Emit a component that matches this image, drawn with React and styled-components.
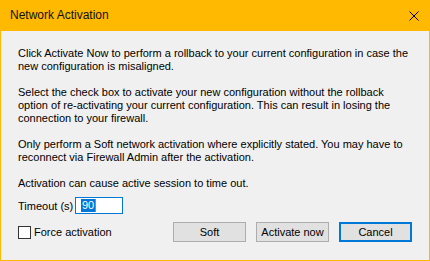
import React from "react";
import styled, { createGlobalStyle } from "styled-components";

const GlobalStyle = createGlobalStyle`
  html, body {
    margin: 0;
    padding: 0;
    background: #f0f0f0;
  }
  body {
    font-family: "Liberation Sans", Arial, sans-serif;
    font-size: 11px;
    color: #000000;
  }
`;

const Window = styled.div`
  box-sizing: border-box;
  width: 430px;
  height: 261px;
  border: 1px solid #ffb900;
  border-top: none;
  background: #f0f0f0;
  display: flex;
  flex-direction: column;
`;

const TitleBar = styled.div`
  height: 31px;
  margin: 0 -1px;
  background: #ffb900;
  display: flex;
  align-items: center;
  justify-content: space-between;
  padding: 0 10px 0 10px;
  flex-shrink: 0;
`;

const Title = styled.div`
  font-size: 12px;
  color: #111;
  padding-bottom: 1px;
`;

const CloseButton = styled.div`
  width: 10px;
  height: 10px;
  display: flex;
  margin-right: 1px;
`;

const Body = styled.div`
  padding: 16px 17px 0 17px;
  display: flex;
  flex-direction: column;
`;

const Paragraph = styled.p`
  margin: 0 0 ${(p) => p.gap ?? 13}px 0;
  line-height: 13px;
`;

const TimeoutRow = styled.div`
  display: flex;
  align-items: center;
  height: 17px;
`;

const Label = styled.span`
  width: 57px;
`;

const TimeoutInput = styled.div`
  box-sizing: border-box;
  width: 48px;
  height: 17px;
  border: 1px solid #0078d7;
  background: #ffffff;
  display: flex;
  align-items: center;
  padding-left: 5px;
`;

const Selected = styled.span`
  background: #0078d7;
  color: #ffffff;
  line-height: 13px;
  padding: 0 1px;
`;

const Caret = styled.span`
  width: 1px;
  height: 13px;
  background: #e8741a;
`;

const BottomRow = styled.div`
  display: flex;
  align-items: center;
  margin-top: 8px;
`;

const CheckLabel = styled.label`
  display: flex;
  align-items: center;
  gap: 3px;
  flex: 1;
`;

const CheckBox = styled.span`
  box-sizing: border-box;
  width: 13px;
  height: 13px;
  border: 1px solid #333333;
  background: #ffffff;
`;

const Buttons = styled.div`
  display: flex;
  gap: 10px;
`;

const Button = styled.button`
  box-sizing: border-box;
  width: 73px;
  height: 20px;
  background: #e1e1e1;
  border: ${(p) => (p.primary ? "2px solid #0078d7" : "1px solid #adadad")};
  font-family: "Liberation Sans", Arial, sans-serif;
  font-size: 11px;
  color: #000;
  padding: 0;
`;

export default function App() {
  return (
    <>
      <GlobalStyle />
      <Window>
        <TitleBar>
          <Title>Network Activation</Title>
          <CloseButton>
            <svg width="10" height="10" viewBox="0 0 10 10">
              <path d="M0.5 0.5 L9.5 9.5 M9.5 0.5 L0.5 9.5" stroke="#000" strokeWidth="1" fill="none" />
            </svg>
          </CloseButton>
        </TitleBar>
        <Body>
          <Paragraph>
            Click Activate Now to perform a rollback to your current configuration in case the
            <br />
            new configuration is misaligned.
          </Paragraph>
          <Paragraph>
            Select the check box to activate your new configuration without the rollback
            <br />
            option of re-activating your current configuration. This can result in losing the
            <br />
            connection to your firewall.
          </Paragraph>
          <Paragraph>
            Only perform a Soft network activation where explicitly stated. You may have to
            <br />
            reconnect via Firewall Admin after the activation.
          </Paragraph>
          <Paragraph gap={7}>Activation can cause active session to time out.</Paragraph>
          <TimeoutRow>
            <Label>Timeout (s)</Label>
            <TimeoutInput>
              <Selected>90</Selected>
              <Caret />
            </TimeoutInput>
          </TimeoutRow>
          <BottomRow>
            <CheckLabel>
              <CheckBox />
              Force activation
            </CheckLabel>
            <Buttons>
              <Button>Soft</Button>
              <Button>Activate now</Button>
              <Button primary>Cancel</Button>
            </Buttons>
          </BottomRow>
        </Body>
      </Window>
    </>
  );
}
